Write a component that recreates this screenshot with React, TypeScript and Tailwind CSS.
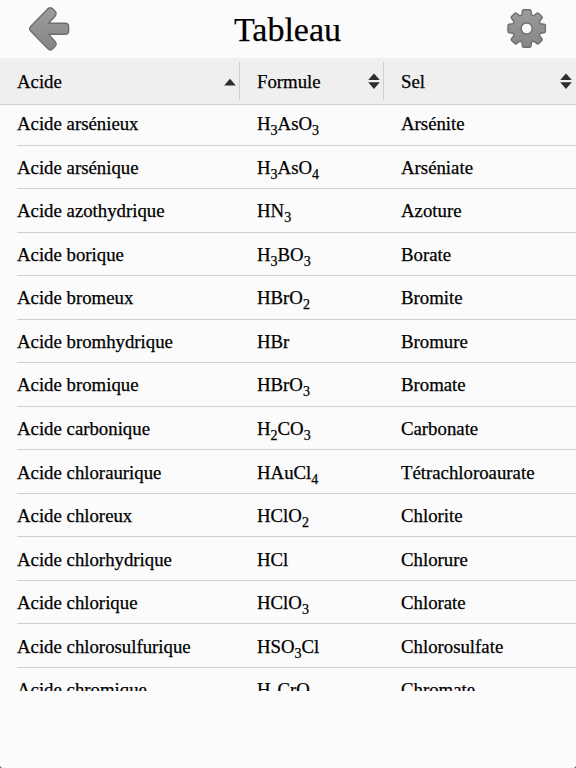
import { FC, Fragment } from "react";

interface Acid {
  name: string;
  formula: string;
  salt: string;
}

const ACIDS: Acid[] = [
  { name: "Acide arsénieux", formula: "H3AsO3", salt: "Arsénite" },
  { name: "Acide arsénique", formula: "H3AsO4", salt: "Arséniate" },
  { name: "Acide azothydrique", formula: "HN3", salt: "Azoture" },
  { name: "Acide borique", formula: "H3BO3", salt: "Borate" },
  { name: "Acide bromeux", formula: "HBrO2", salt: "Bromite" },
  { name: "Acide bromhydrique", formula: "HBr", salt: "Bromure" },
  { name: "Acide bromique", formula: "HBrO3", salt: "Bromate" },
  { name: "Acide carbonique", formula: "H2CO3", salt: "Carbonate" },
  { name: "Acide chloraurique", formula: "HAuCl4", salt: "Tétrachloroaurate" },
  { name: "Acide chloreux", formula: "HClO2", salt: "Chlorite" },
  { name: "Acide chlorhydrique", formula: "HCl", salt: "Chlorure" },
  { name: "Acide chlorique", formula: "HClO3", salt: "Chlorate" },
  { name: "Acide chlorosulfurique", formula: "HSO3Cl", salt: "Chlorosulfate" },
  { name: "Acide chromique", formula: "H2CrO4", salt: "Chromate" },
];

const BackIcon: FC = () => (
  <svg viewBox="0 0.6 44 46" className="w-[44px] h-[46px]">
    <defs>
      <linearGradient id="arrow" x1="0" y1="0" x2="0" y2="1">
        <stop offset="0" stopColor="#9c9c9c" />
        <stop offset="1" stopColor="#868686" />
      </linearGradient>
    </defs>
    <path
      d="M21.2 3.2Q23.2 1.4 25.3 3.2L27.9 5.7Q30.2 8.1 28 10.8L21.6 17.9H38.3Q41.6 17.9 41.6 21.2V25.6Q41.6 28.9 38.3 28.9H21.6L28 36Q30.2 38.8 27.9 41.2L25.3 43.7Q23.2 45.5 21.2 43.7L3.6 25.6Q1.6 23.4 3.6 21.2Z"
      fill="url(#arrow)"
      stroke="#6f6f6f"
      strokeWidth="1.4"
      strokeLinejoin="round"
    />
  </svg>
);

const GearIcon: FC = () => (
  <svg viewBox="-20.7 -20.5 42 42" className="w-[42px] h-[42px]">
    <defs>
      <linearGradient id="gear" x1="0" y1="0" x2="0" y2="1">
        <stop offset="0" stopColor="#9c9c9c" />
        <stop offset="1" stopColor="#868686" />
      </linearGradient>
    </defs>
    <path
      d="M-4.3-17.6Q-4.1-18.7-3-18.7H3Q4.1-18.7 4.3-17.6L4.8-13.6L7-12.7L10.2-15.2Q11.1-15.9 12-15.1L15.1-12Q15.9-11.1 15.2-10.2L12.7-7L13.6-4.8L17.6-4.3Q18.7-4.1 18.7-3V3Q18.7 4.1 17.6 4.3L13.6 4.8L12.7 7L15.2 10.2Q15.9 11.1 15.1 12L12 15.1Q11.1 15.9 10.2 15.2L7 12.7L4.8 13.6L4.3 17.6Q4.1 18.7 3 18.7H-3Q-4.1 18.7-4.3 17.6L-4.8 13.6L-7 12.7L-10.2 15.2Q-11.1 15.9-12 15.1L-15.1 12Q-15.9 11.1-15.2 10.2L-12.7 7L-13.6 4.8L-17.6 4.3Q-18.7 4.1-18.7 3V-3Q-18.7-4.1-17.6-4.3L-13.6-4.8L-12.7-7L-15.2-10.2Q-15.9-11.1-15.1-12L-12-15.1Q-11.1-15.9-10.2-15.2L-7-12.7L-4.8-13.6ZM0-5.5A5.5 5.5 0 1 0 0 5.5A5.5 5.5 0 1 0 0-5.5Z"
      fill="url(#gear)"
      fillRule="evenodd"
      stroke="#6f6f6f"
      strokeWidth="1.4"
      strokeLinejoin="round"
    />
  </svg>
);

const SortIcon: FC<{ ascending?: boolean }> = ({ ascending }) => (
  <svg viewBox="0 0 12 16" className="w-3 h-4" fill="#2e2e2e">
    {ascending ? (
      <path d="M6 5.8L11.8 12.6H.2Z" />
    ) : (
      <path d="M6 .5L11.8 7H.2ZM.2 9.3H11.8L6 16Z" />
    )}
  </svg>
);

// Digits in a formula are always lowered
const Formula: FC<{ value: string }> = ({ value }) => (
  <>
    {value.split(/(\d+)/).map((part, i) =>
      /^\d+$/.test(part) ? (
        <sub key={i} className="text-[14px] leading-none bottom-[-5px]">
          {part}
        </sub>
      ) : (
        <Fragment key={i}>{part}</Fragment>
      )
    )}
  </>
);

const App: FC = () => {
  return (
    <div className="h-screen bg-[#555]">
      <div className="h-full overflow-hidden rounded-b-[3px] bg-[#fbfbfb] font-['Liberation_Serif',serif] text-[18.8px] text-black [-webkit-text-stroke:0.25px_black]">
        <header className="flex h-[58px] items-center justify-between pl-[27px] pr-[28px]">
          <button type="button" aria-label="Retour">
            <BackIcon />
          </button>
          <h1 className="pt-[1px] pr-[2px] text-[34px] leading-none">Tableau</h1>
          <button type="button" aria-label="Options">
            <GearIcon />
          </button>
        </header>

        <div className="grid h-[47px] grid-cols-[240px_144px_192px] items-center border-b border-[#d0d0d0] bg-[#efefef]">
          <div className="flex h-[38px] items-center justify-between border-r border-[#cecece] pl-[17px] pr-[3px]">
            <span className="pt-[3px]">Acide</span>
            <SortIcon ascending />
          </div>
          <div className="flex h-[38px] items-center justify-between border-r border-[#cecece] pl-[17px] pr-[3px]">
            <span className="pt-[3px]">Formule</span>
            <SortIcon />
          </div>
          <div className="flex h-[38px] items-center justify-between pl-[17px] pr-[4px]">
            <span className="pt-[3px]">Sel</span>
            <SortIcon />
          </div>
        </div>

        <div className="h-[586px] overflow-hidden">
          <div className="-mt-[3px] pl-[17px]">
            {ACIDS.map((acid) => (
              <div
                key={acid.name}
                className="grid h-[43.54px] grid-cols-[240px_144px_1fr] items-center border-b border-[#cecece] pt-[2px] leading-[22px]"
              >
                <span>{acid.name}</span>
                <span className="h-[22px]">
                  <Formula value={acid.formula} />
                </span>
                <span>{acid.salt}</span>
              </div>
            ))}
          </div>
        </div>
      </div>
    </div>
  );
};

export default App;
